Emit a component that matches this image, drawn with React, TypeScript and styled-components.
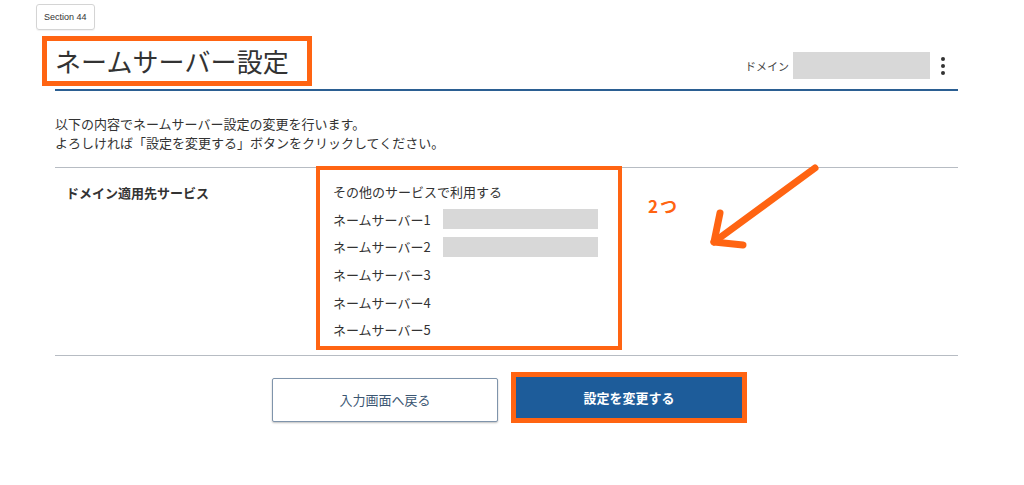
import React from "react";
import styled, { createGlobalStyle } from "styled-components";

const GlobalStyle = createGlobalStyle`
  html, body {
    margin: 0;
    padding: 0;
    background: #ffffff;
  }
  body {
    font-family: "Noto Sans CJK JP", "Noto Sans", "Liberation Sans", sans-serif;
    color: #333333;
  }
  * {
    box-sizing: border-box;
  }
`;

const ORANGE = "#ff6412";

const Page = styled.div`
  width: 1024px;
  min-height: 485px;
  padding-top: 4px;
  background: #ffffff;
`;

const SectionTag = styled.div`
  width: fit-content;
  margin-left: 36px;
  height: 26px;
  padding: 0 7px;
  border: 1px solid #d4d4d4;
  border-radius: 3px;
  box-shadow: 0 1px 1px rgba(0, 0, 0, 0.06);
  font-family: "Liberation Sans", Arial, sans-serif;
  font-size: 9px;
  line-height: 24px;
  color: #333;
`;

const Main = styled.main`
  width: 903px;
  margin: 6px 0 0 55px;
`;

const HeaderRow = styled.header`
  display: flex;
  justify-content: space-between;
  align-items: flex-end;
  padding-bottom: 3px;
  border-bottom: 2px solid #2b5f92;
`;

const Title = styled.h1`
  margin: 0 0 0 -13px;
  padding: 2px 18px 2px 8px;
  border: 5px solid ${ORANGE};
  font-size: 26px;
  line-height: 36px;
  font-weight: 400;
  color: #333;
  letter-spacing: 0.1px;
`;

const DomainGroup = styled.div`
  display: flex;
  align-items: center;
  margin-bottom: 7px;
`;

const DomainLabel = styled.span`
  font-size: 11px;
  color: #444;
  margin-right: 4px;
`;

const Masked = styled.span<{ $w: number; $h: number }>`
  display: inline-block;
  width: ${(p) => p.$w}px;
  height: ${(p) => p.$h}px;
  background: #d8d8d8;
`;

const Kebab = styled.button`
  display: flex;
  flex-direction: column;
  align-items: center;
  gap: 3px;
  width: 16px;
  margin: 0 7px 0 5px;
  padding: 0;
  border: 0;
  background: none;

  span {
    width: 4px;
    height: 4px;
    border-radius: 50%;
    background: #333;
  }
`;

const Intro = styled.p`
  margin: 23px 0 15px;
  font-size: 13px;
  line-height: 19px;
  color: #333;
`;

const ConfirmTable = styled.div`
  position: relative;
  display: grid;
  grid-template-columns: 261px 306px 1fr;
  border-top: 1px solid #b7bcc3;
  border-bottom: 1px solid #b7bcc3;
  padding-bottom: 5px;
`;

const RowLabel = styled.div`
  padding: 16px 0 0 11px;
  font-size: 13px;
  line-height: 18px;
  font-weight: 700;
  color: #333;
`;

const ValueList = styled.ul`
  list-style: none;
  margin: -2px 0 0;
  padding: 8px 0 2px 13px;
  border: 4px solid ${ORANGE};
`;

const ValueItem = styled.li`
  display: flex;
  align-items: center;
  height: 27.6px;
  font-size: 13px;
  color: #333;
`;

const ServerName = styled.span`
  width: 110px;
`;

const CountNote = styled.span`
  position: absolute;
  left: 593px;
  top: 28px;
  font-size: 17px;
  line-height: 20px;
  font-weight: 700;
  color: ${ORANGE};
  letter-spacing: 2px;
`;

const ArrowMark = styled.svg`
  position: absolute;
  left: 640px;
  top: -10px;
`;

const Actions = styled.div`
  display: flex;
  justify-content: center;
  align-items: flex-start;
  gap: 18px;
  margin-top: 22px;
  padding-left: 1px;
`;

const Button = styled.button<{ $primary?: boolean }>`
  width: 226px;
  height: ${(p) => (p.$primary ? 41 : 44)}px;
  margin-top: ${(p) => (p.$primary ? -1 : 0)}px;
  border-radius: ${(p) => (p.$primary ? 0 : 2)}px;
  font-family: inherit;
  font-size: 13px;
  font-weight: ${(p) => (p.$primary ? 700 : 400)};
  color: ${(p) => (p.$primary ? "#ffffff" : "#3b5672")};
  background: ${(p) => (p.$primary ? "#1d5c9a" : "#ffffff")};
  border: ${(p) => (p.$primary ? "none" : "1px solid #7f94ab")};
  box-shadow: ${(p) => (p.$primary ? "none" : "0 1px 2px rgba(0, 0, 0, 0.25)")};
  outline: ${(p) => (p.$primary ? `5px solid ${ORANGE}` : "none")};
  cursor: pointer;
`;

const servers = [
  { name: "ネームサーバー1", masked: true },
  { name: "ネームサーバー2", masked: true },
  { name: "ネームサーバー3", masked: false },
  { name: "ネームサーバー4", masked: false },
  { name: "ネームサーバー5", masked: false },
];

export default function App() {
  return (
    <Page>
      <GlobalStyle />
      <SectionTag>Section 44</SectionTag>

      <Main>
        <HeaderRow>
          <Title>ネームサーバー設定</Title>
          <DomainGroup>
            <DomainLabel>ドメイン</DomainLabel>
            <Masked $w={137} $h={27} />
            <Kebab aria-label="menu">
              <span />
              <span />
              <span />
            </Kebab>
          </DomainGroup>
        </HeaderRow>

        <Intro>
          以下の内容でネームサーバー設定の変更を行います。
          <br />
          よろしければ「設定を変更する」ボタンをクリックしてください。
        </Intro>

        <ConfirmTable>
          <RowLabel>ドメイン適用先サービス</RowLabel>
          <ValueList>
            <ValueItem>その他のサービスで利用する</ValueItem>
            {servers.map((s) => (
              <ValueItem key={s.name}>
                <ServerName>{s.name}</ServerName>
                {s.masked && <Masked $w={155} $h={20} />}
              </ValueItem>
            ))}
          </ValueList>
          <div />

          <CountNote>2つ</CountNote>
          <ArrowMark width="130" height="100" viewBox="0 0 130 100">
            <g fill="none" stroke={ORANGE} strokeWidth="7" strokeLinecap="round" strokeLinejoin="round">
              <path d="M120 10 L19 84" />
              <path d="M25 55 L19 84 L48 87" />
            </g>
          </ArrowMark>
        </ConfirmTable>

        <Actions>
          <Button>入力画面へ戻る</Button>
          <Button $primary>設定を変更する</Button>
        </Actions>
      </Main>
    </Page>
  );
}
